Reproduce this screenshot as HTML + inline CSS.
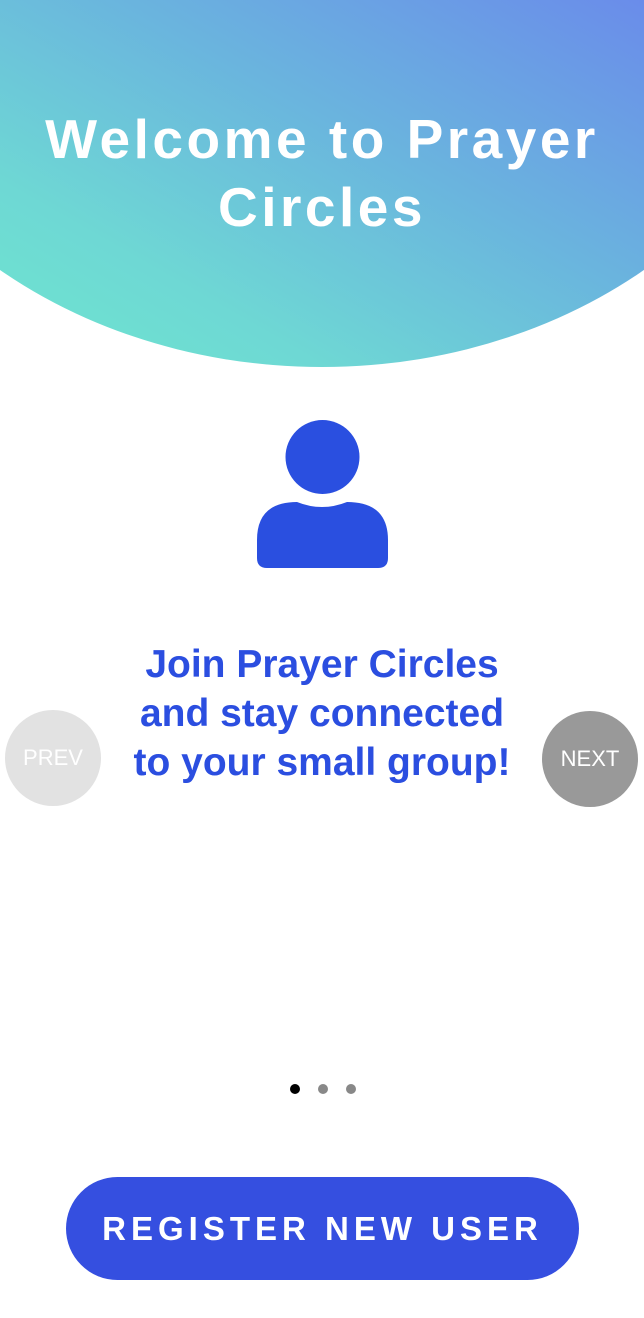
<!DOCTYPE html>
<html><head><meta charset="utf-8"><style>
html,body{margin:0;padding:0;width:644px;height:1318px;overflow:hidden;background:#fff;font-family:"Liberation Sans",sans-serif;position:relative}
.hdr{position:absolute;left:0;top:0;width:644px;height:367px;clip-path:ellipse(500px 413px at 322px -46px);background:linear-gradient(to bottom left,#6a8cea 0%,#6ab4de 40%,#6ed8d4 75%,#6ee6cf 100%);}
h1{position:absolute;top:105px;left:0;width:644px;margin:0;text-align:center;color:#fff;font-size:55px;font-weight:bold;letter-spacing:3.5px;line-height:68px}
.t{position:absolute;top:640px;left:0;width:644px;text-align:center;color:#2b4ee0;font-size:39px;font-weight:bold;line-height:49px}
.btn{position:absolute;width:96px;height:96px;border-radius:50%;color:#fff;font-size:22px;text-align:center;line-height:96px}
.dot{position:absolute;width:10px;height:10px;border-radius:50%;top:1084px}
.reg{position:absolute;left:66px;top:1177px;width:513px;height:103px;border-radius:52px;background:#354fe0;color:#fff;font-size:33px;font-weight:bold;letter-spacing:5px;text-align:center;line-height:103px}
</style></head><body>
<div class="hdr"></div>
<h1>Welcome to Prayer<br>Circles</h1>
<svg style="position:absolute;left:0;top:0" width="644" height="600">
<circle cx="322.5" cy="457" r="37" fill="#2a4fe0"/>
<path d="M257 568 V540 Q257 502 297 502 Q322 512 347 502 Q388 502 388 540 V558 Q388 568 378 568 H267 Q257 568 257 558 Z" fill="#2a4fe0"/>
</svg>
<div class="t">Join Prayer Circles<br>and stay connected<br>to your small group!</div>
<div class="btn" style="left:5px;top:710px;background:#e2e2e2">PREV</div>
<div class="btn" style="left:542px;top:711px;background:#999">NEXT</div>
<div class="dot" style="left:290px;background:#000"></div>
<div class="dot" style="left:318px;background:#888"></div>
<div class="dot" style="left:346px;background:#888"></div>
<div class="reg">REGISTER NEW USER</div>
</body></html>
